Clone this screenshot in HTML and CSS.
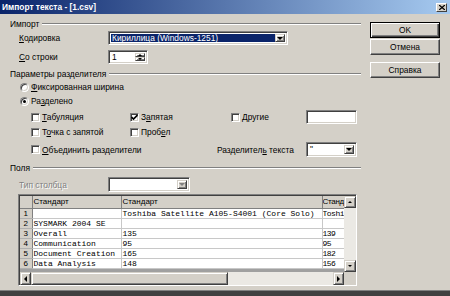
FILE: index.html
```html
<!DOCTYPE html>
<html lang="ru">
  <head>
    <meta charset="UTF-8" />
    <title>Импорт текста - [1.csv]</title>
    <link rel="stylesheet" href="styles.css">
  </head>
  <body>
    <div class="window">
      <!-- Title bar -->
      <div class="titlebar">
        <span class="title">Импорт текста - [1.csv]</span>
        <span class="close-btn">
          <svg width="6" height="5" viewBox="0 0 6 5"><path d="M0 0L6 5M6 0L0 5" stroke="#000" stroke-width="1.3"/></svg>
        </span>
      </div>

      <div class="content">
        <div class="panel">
          <div class="group g-import"><span>Импорт</span><i class="etch"></i></div>

          <div class="row r-enc">
            <span class="lbl"><u>К</u>одировка</span>
            <div class="combo combo-enc selected">
              <span class="value">Кириллица (Windows-1251)</span>
              <span class="arrow-btn"><b class="tri-down"></b></span>
            </div>
          </div>

          <div class="row r-from">
            <span class="lbl"><u>С</u>о строки</span>
            <div class="spin">
              <span class="value">1</span>
              <span class="spin-btns">
                <span class="spin-btn"><b class="tri-up small"></b></span>
                <span class="spin-btn"><b class="tri-down small"></b></span>
              </span>
            </div>
          </div>

          <div class="group g-sep"><span>Параметры разделителя</span><i class="etch"></i></div>

          <div class="radio-row r-fixed">
            <span class="radio"></span>
            <span><u>Ф</u>иксированная ширина</span>
          </div>
          <div class="radio-row">
            <span class="radio checked"></span>
            <span>Ра<u>з</u>делено</span>
          </div>

          <div class="check-row cr-1">
            <span class="check-item"><span class="checkbox"></span><span><u>Т</u>абуляция</span></span>
            <span class="check-item">
              <span class="checkbox">
                <svg width="7" height="7" viewBox="0 0 7 7"><path d="M0.5 3L2.5 5L6.5 1" fill="none" stroke="#000" stroke-width="1.7"/></svg>
              </span>
              <span>З<u>а</u>пятая</span>
            </span>
            <span class="check-item"><span class="checkbox"></span><span><u>Д</u>ругие</span></span>
            <span class="field field-other"></span>
          </div>
          <div class="check-row cr-2">
            <span class="check-item"><span class="checkbox"></span><span>Т<u>о</u>чка с запятой</span></span>
            <span class="check-item"><span class="checkbox"></span><span>Проб<u>е</u>л</span></span>
          </div>
          <div class="check-row cr-3">
            <span class="check-item wide"><span class="checkbox"></span><span><u>О</u>бъединить разделители</span></span>
            <span class="quote-lbl">Разделител<u>ь</u> текста</span>
            <div class="combo combo-quote">
              <span class="value">"</span>
              <span class="arrow-btn"><b class="tri-down"></b></span>
            </div>
          </div>

          <div class="group g-fields"><span>Поля</span><i class="etch"></i></div>

          <div class="row r-type">
            <span class="lbl disabled">Тип столбца</span>
            <div class="combo combo-type">
              <span class="value"></span>
              <span class="arrow-btn"><b class="tri-down grey"></b></span>
            </div>
          </div>

          <div class="grid-box">
            <div class="grid-main">
              <div class="grid-view">
                <table class="data">
                  <colgroup>
                    <col class="c-num"><col class="c-1"><col class="c-2"><col class="c-3">
                  </colgroup>
                  <thead>
                    <tr><th></th><th>Стандарт</th><th>Стандарт</th><th>Станд</th></tr>
                  </thead>
                  <tbody>
                    <tr><td class="num">1</td><td></td><td>Toshiba Satellite A105-S4001 (Core Solo)</td><td>Toshi</td></tr>
                    <tr><td class="num">2</td><td>SYSMARK 2004 SE</td><td></td><td></td></tr>
                    <tr><td class="num">3</td><td>Overall</td><td>135</td><td>139</td></tr>
                    <tr><td class="num">4</td><td>Communication</td><td>95</td><td>95</td></tr>
                    <tr><td class="num">5</td><td>Document Creation</td><td>165</td><td>182</td></tr>
                    <tr><td class="num">6</td><td>Data Analysis</td><td>148</td><td>156</td></tr>
                  </tbody>
                </table>
              </div>
              <div class="vscroll">
                <span class="sb-btn"><b class="tri-up small"></b></span>
                <span class="sb-track"></span>
                <span class="sb-btn"><b class="tri-down small"></b></span>
              </div>
            </div>
            <div class="hscroll">
              <span class="sb-btn h"><b class="tri-left"></b></span>
              <span class="sb-thumb"></span>
              <span class="sb-track"></span>
              <span class="sb-btn h"><b class="tri-right"></b></span>
              <span class="sb-corner"></span>
            </div>
          </div>
        </div>

        <div class="side">
          <button class="btn btn-default">OK</button>
          <button class="btn btn-cancel">Отмена</button>
          <button class="btn btn-help">Справка</button>
        </div>
      </div>
    </div>
  </body>
</html>
```

FILE: styles.css
```css
* {
  box-sizing: border-box;
}

html {
  background: #404040;
}

body {
  margin: 0;
  font-family: "Liberation Sans", Arial, sans-serif;
  font-size: 8.4px;
  color: #000;
}

u {
  text-decoration: underline;
}

.window {
  width: 450px;
  height: 291px;
  background: #d4d0c8;
  border-bottom: 1px solid #808080;
  display: flex;
  flex-direction: column;
}

/* Title bar */
.titlebar {
  height: 14px;
  background: linear-gradient(to right, #0a246a, #a6caf0);
  display: flex;
  align-items: center;
  justify-content: space-between;
  padding: 0 3px 0 2px;
}

.title {
  color: #fff;
  font-weight: bold;
  font-size: 8.4px;
}

.close-btn {
  width: 11px;
  height: 9px;
  background: #d4d0c8;
  border: 1px solid;
  border-color: #fff #404040 #404040 #fff;
  display: flex;
  align-items: center;
  justify-content: center;
}

.content {
  display: flex;
  flex: 1;
}

.panel {
  width: 364px;
  display: flex;
  flex-direction: column;
}

/* Group headers with etched line */
.group {
  display: flex;
  align-items: center;
  height: 14px;
  padding-left: 10px;
  width: 361px;
}

.etch {
  flex: 1;
  margin-left: 3px;
  border-top: 1px solid #808080;
  border-bottom: 1px solid #fff;
}

.g-import {
  margin-top: 3px;
}

.g-sep {
  margin-top: 3px;
  height: 13px;
}

.g-fields {
  margin-top: 4px;
}

.row {
  display: flex;
  align-items: center;
  padding-left: 19px;
}

.lbl {
  width: 89px;
}

.lbl.disabled {
  color: #808080;
  text-shadow: 1px 1px 0 #fff;
}

.r-enc {
  height: 14px;
}

.r-from {
  margin-top: 5px;
  height: 14px;
}

.r-type {
  margin-top: 2px;
  height: 15px;
}

/* Sunken fields */
.combo,
.spin,
.field,
.checkbox,
.radio {
  background: #fff;
  border: 1px solid;
  border-color: #808080 #fff #fff #808080;
  box-shadow: inset 1px 1px 0 #404040, inset -1px -1px 0 #d4d0c8;
}

.combo {
  display: flex;
  align-items: stretch;
  padding: 2px;
}

.combo .value {
  flex: 1;
  padding-left: 1px;
  line-height: 9px;
  white-space: nowrap;
  overflow: hidden;
}

.combo.selected .value {
  background: #0a246a;
  color: #fff;
}

.combo-enc {
  width: 180px;
  height: 14px;
}

.combo-quote {
  width: 51px;
  height: 15px;
}

.combo-type {
  width: 82px;
  height: 15px;
}

.arrow-btn,
.spin-btn,
.sb-btn {
  background: #d4d0c8;
  border: 1px solid;
  border-color: #d4d0c8 #404040 #404040 #d4d0c8;
  box-shadow: inset 1px 1px 0 #fff, inset -1px -1px 0 #808080;
  display: flex;
  align-items: center;
  justify-content: center;
}

.arrow-btn {
  width: 10px;
}

.tri-down,
.tri-up,
.tri-left,
.tri-right {
  width: 0;
  height: 0;
  border: 3px solid transparent;
}

.tri-down {
  border-top: 3px solid #000;
  border-bottom: 0;
}

.tri-up {
  border-bottom: 3px solid #000;
  border-top: 0;
}

.tri-down.small,
.tri-up.small {
  border-left-width: 2px;
  border-right-width: 2px;
  border-top-width: 2px;
}

.tri-up.small {
  border-top-width: 0;
  border-bottom-width: 2px;
}

.tri-down.grey {
  border-top-color: #808080;
}

.tri-left {
  border-right: 3px solid #000;
  border-left: 0;
}

.tri-right {
  border-left: 3px solid #000;
  border-right: 0;
}

.spin {
  width: 40px;
  height: 14px;
  display: flex;
  padding: 2px 2px 2px 3px;
}

.spin .value {
  flex: 1;
  line-height: 9px;
}

.spin-btns {
  width: 10px;
  display: flex;
  flex-direction: column;
}

.spin-btn {
  flex: 1;
}

/* Radios and checkboxes */
.radio-row {
  display: flex;
  align-items: center;
  gap: 2px;
  height: 14px;
  padding-left: 20px;
}

.radio {
  width: 9px;
  height: 9px;
  border-radius: 50%;
  display: flex;
  align-items: center;
  justify-content: center;
}

.radio.checked::after {
  content: "";
  width: 3px;
  height: 3px;
  border-radius: 50%;
  background: #000;
}

.check-row {
  display: grid;
  grid-template-columns: 99px 101px 75px 51px;
  align-items: center;
  margin-left: 31px;
  height: 14px;
}

.cr-1 {
  margin-top: 2px;
}

.cr-2 {
  margin-top: 1px;
}

.cr-3 {
  margin-top: 3px;
  height: 15px;
  grid-template-columns: 186px 89px 51px;
}

.check-item {
  display: flex;
  align-items: center;
  gap: 2px;
}

.checkbox {
  width: 9px;
  height: 9px;
  display: flex;
  align-items: center;
  justify-content: center;
}

.field-other {
  height: 14px;
}

/* Data grid */
.grid-box {
  margin-top: 2px;
  margin-left: 18px;
  width: 339px;
  height: 92px;
  border: 1px solid;
  border-color: #808080 #fff #fff #808080;
  box-shadow: inset 1px 1px 0 #404040;
  padding: 1px 0 0 1px;
  display: flex;
  flex-direction: column;
}

.grid-main {
  display: flex;
  height: 77px;
}

.grid-view {
  width: 325px;
  overflow: hidden;
  background: #a0a0a0;
}

.data {
  table-layout: fixed;
  width: 325px;
  border-collapse: collapse;
  background: #fff;
}

.c-num {
  width: 12px;
}

.c-1 {
  width: 89px;
}

.c-2 {
  width: 201px;
}

.c-3 {
  width: 23px;
}

.data th {
  height: 12px;
  background: #d4d0c8;
  font-weight: normal;
  font-size: 8px;
  text-align: left;
  padding: 0 1px;
  border-right: 1px solid #808080;
  border-bottom: 1px solid #808080;
  white-space: nowrap;
  overflow: hidden;
}

.data th:last-child {
  padding: 0;
  letter-spacing: -0.3px;
}

.data td {
  height: 10px;
  padding: 0 1px;
  font-family: "Liberation Mono", "Courier New", monospace;
  font-size: 8px;
  line-height: 9px;
  white-space: nowrap;
  overflow: hidden;
  border-right: 1px solid #c8c8c8;
  border-bottom: 1px solid #c8c8c8;
}

.data td:last-child {
  padding: 0;
  border-right: 0;
  letter-spacing: -0.5px;
}

.data td.num {
  background: #d4d0c8;
  font-family: "Liberation Sans", Arial, sans-serif;
  text-align: center;
  padding: 0;
  border-right: 1px solid #808080;
  border-bottom: 1px solid #b0b0b0;
}

.vscroll {
  width: 12px;
  display: flex;
  flex-direction: column;
}

.vscroll .sb-btn {
  height: 12px;
}

.sb-track {
  flex: 1;
  background: #ebe9e4;
}

.hscroll {
  display: flex;
  height: 13px;
}

.sb-btn.h {
  width: 11px;
}

.sb-thumb {
  width: 197px;
  background: #d4d0c8;
  border: 1px solid;
  border-color: #d4d0c8 #404040 #404040 #d4d0c8;
  box-shadow: inset 1px 1px 0 #fff, inset -1px -1px 0 #808080;
}

.sb-corner {
  width: 12px;
  background: #d4d0c8;
}

/* Dialog buttons */
.side {
  display: flex;
  flex-direction: column;
  padding-left: 6px;
}

.btn {
  width: 70px;
  height: 16px;
  padding: 0;
  font-family: "Liberation Sans", Arial, sans-serif;
  font-size: 8.4px;
  color: #000;
  background: #d4d0c8;
  border: 1px solid;
  border-color: #fff #404040 #404040 #fff;
  box-shadow: inset -1px -1px 0 #808080;
}

.btn-default {
  margin-top: 8px;
  border-color: #000;
  box-shadow: inset 1px 1px 0 #fff, inset -1px -1px 0 #404040, inset -2px -2px 0 #808080;
}

.btn-cancel {
  margin-top: 1px;
}

.btn-help {
  margin-top: 7px;
}
```
